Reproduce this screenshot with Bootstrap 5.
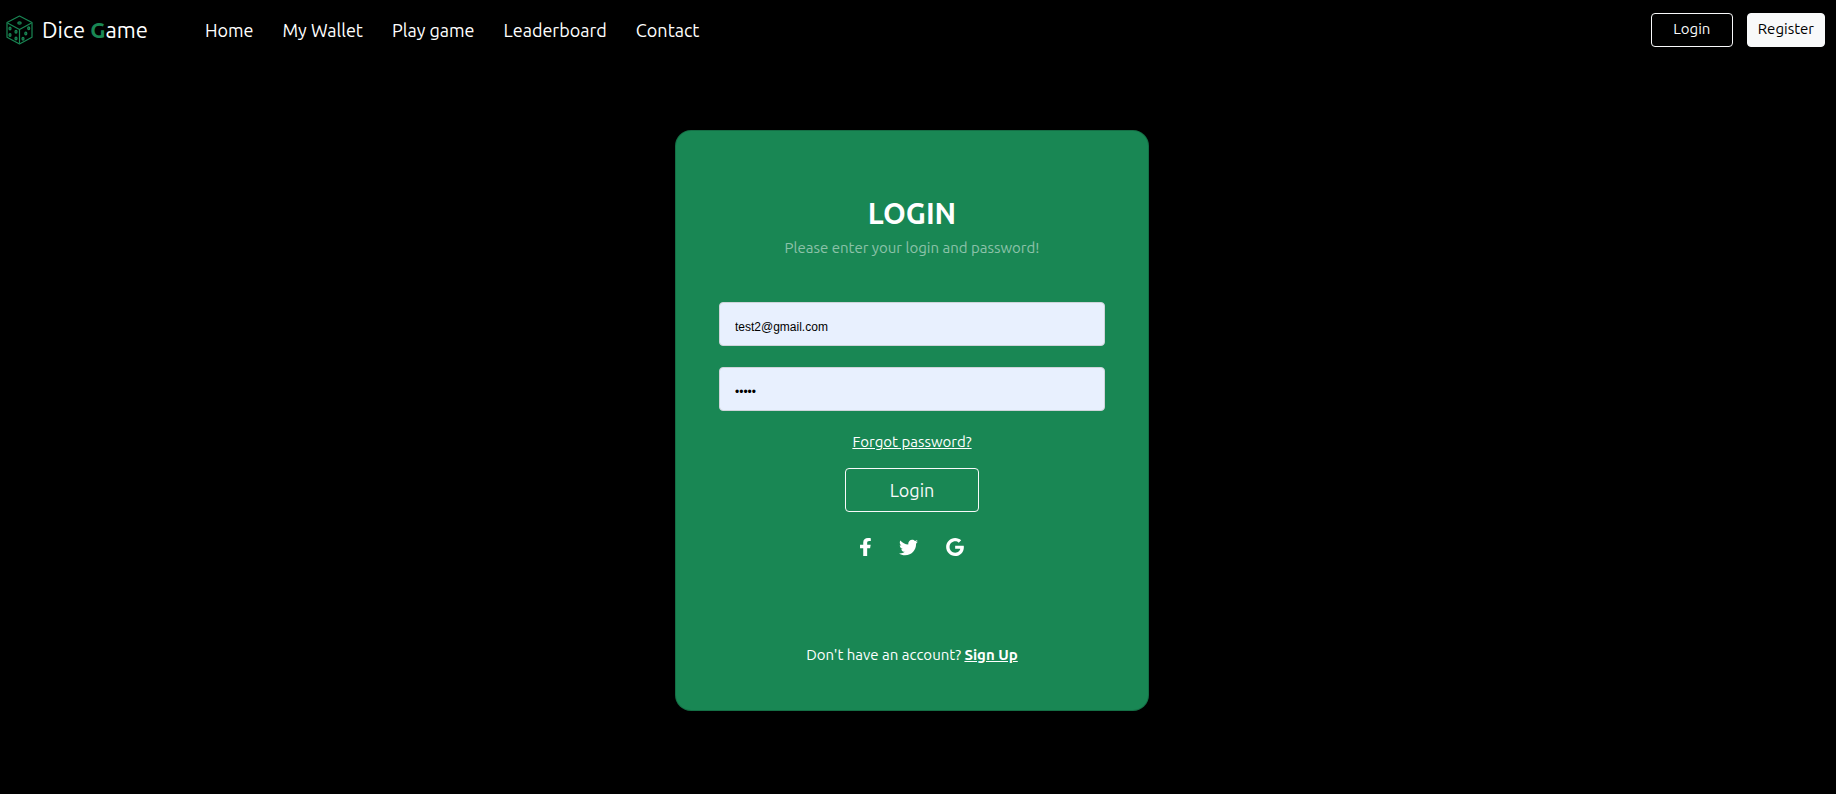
<!DOCTYPE html>
<html lang="en">
<head>
<meta charset="utf-8">
<meta name="viewport" content="width=device-width, initial-scale=1">
<title>Dice Game - Login</title>
<link href="https://cdn.jsdelivr.net/npm/bootstrap@5.3.0/dist/css/bootstrap.min.css" rel="stylesheet">
<style>
  body { background: #000; color: #fff; font-family: Ubuntu, "Open Sans", sans-serif; font-size: 15px; line-height: 20px; }
  .site-nav { --bs-navbar-padding-y: 0; min-height: 60px; padding-right: 11px; padding-left: 6px; }
  .site-nav .navbar-brand { font-size: 22px; line-height: 30px; margin-right: 49px; padding: 0; gap: 9px; }
  .site-nav .navbar-nav { gap: 13px; }
  .site-nav .nav-link { font-size: 18px; line-height: 24px; padding-top: 0; padding-bottom: 0; }
  .nav-actions { gap: 14px; }
  .nav-actions .btn { min-width: 78px; font-size: 15px; line-height: 20px; padding: 5px 10px 7px; border-radius: 4px; }
  .nav-actions .btn-outline-light { min-width: 82px; }
  .page { padding: 70px 24px 80px 12px; }
  .login-card { max-width: 474px; border-radius: 16px; background: #198754; }
  .login-card .card-body { padding: 65px 43px 45px; }
  .login-card h1 { font-size: 29px; line-height: 34px; margin-bottom: 8px; }
  .login-field { height: 44px; padding: 15px 15px 9px; border-color: #ced4da; border-radius: 4px; background: #e8f0fe; color: #000; font: 12px/18px "Liberation Sans", Arial, sans-serif; }
  .login-field:focus { background: #e8f0fe; }
  .fields { gap: 21px; margin: 44px 0 21px; }
  .login-submit { width: 134px; height: 44px; padding: 0; border-radius: 4px; font-size: 18px; margin-top: 16px; }
  .socials { margin: 26px 0 89px; gap: 28px; height: 18px; }
</style>
</head>
<body>
<nav class="navbar navbar-expand-lg navbar-dark site-nav">
  <a class="navbar-brand d-flex align-items-center" href="#">
    <svg width="27" height="30" viewBox="0 0 27 30" fill="none" stroke="#198754" stroke-width="1.2" stroke-linejoin="round" aria-hidden="true">
      <path d="M13.5 1 26 7.5v14.8L13.5 29 1 22.3V7.5z"/>
      <path d="M1.5 8 13.5 14.5 25.5 8M13.5 14.5V28.5"/>
      <g fill="#198754" fill-opacity=".5">
        <ellipse cx="13.5" cy="8" rx="1.7" ry="1.1"/>
        <ellipse cx="4" cy="13.5" rx="1" ry="1.4"/><ellipse cx="10" cy="16.8" rx="1" ry="1.4"/>
        <ellipse cx="4" cy="20" rx="1" ry="1.4"/><ellipse cx="10" cy="23.5" rx="1" ry="1.4"/>
        <ellipse cx="22.7" cy="13.3" rx="1" ry="1.4"/><ellipse cx="19.8" cy="18.5" rx="1" ry="1.4"/><ellipse cx="17" cy="23.7" rx="1" ry="1.4"/>
      </g>
    </svg>
    <span>Dice <b class="text-success">G</b>ame</span>
  </a>
  <button class="navbar-toggler" type="button" data-bs-toggle="collapse" data-bs-target="#mainNav" aria-controls="mainNav" aria-expanded="false" aria-label="Toggle navigation"><span class="navbar-toggler-icon"></span></button>
  <div class="collapse navbar-collapse" id="mainNav">
    <div class="navbar-nav me-auto">
      <a class="nav-link text-white" href="#">Home</a>
      <a class="nav-link text-white" href="#">My Wallet</a>
      <a class="nav-link text-white" href="#">Play game</a>
      <a class="nav-link text-white" href="#">Leaderboard</a>
      <a class="nav-link text-white" href="#">Contact</a>
    </div>
    <div class="d-flex nav-actions">
      <button class="btn btn-outline-light" type="button">Login</button>
      <button class="btn btn-light" type="button">Register</button>
    </div>
  </div>
</nav>

<main class="page d-flex justify-content-center">
  <div class="card login-card text-white w-100">
    <form class="card-body text-center">
      <h1 class="fw-bold text-uppercase">Login</h1>
      <p class="text-white-50 mb-0">Please enter your login and password!</p>
      <div class="fields d-flex flex-column">
        <input class="form-control login-field" type="email" aria-label="Email" value="test2@gmail.com">
        <input class="form-control login-field" type="password" aria-label="Password" value="12345">
      </div>
      <p class="mb-0"><a class="text-white" href="#">Forgot password?</a></p>
      <button class="btn btn-outline-light login-submit" type="submit">Login</button>
      <div class="socials d-flex justify-content-center align-items-center">
        <a class="text-white d-flex" href="#" aria-label="Facebook">
          <svg width="11" height="18" viewBox="22 0 280 512" preserveAspectRatio="none" fill="currentColor"><path d="M279.14 288l14.22-92.66h-88.91v-60.13c0-25.35 12.42-50.06 52.24-50.06h40.42V6.26S260.43 0 225.36 0c-73.22 0-121.08 44.38-121.08 124.72v70.62H22.89V288h81.39v224h100.17V288z"/></svg>
        </a>
        <a class="text-white d-flex" href="#" aria-label="Twitter">
          <svg width="19" height="19" viewBox="0 0 512 512" fill="currentColor"><path d="M459.37 151.716c.325 4.548.325 9.097.325 13.645 0 138.72-105.583 298.558-298.558 298.558-59.452 0-114.68-17.219-161.137-47.106 8.447.974 16.568 1.299 25.34 1.299 49.055 0 94.213-16.568 130.274-44.832-46.132-.975-84.792-31.188-98.112-72.772 6.498.974 12.995 1.624 19.818 1.624 9.421 0 18.843-1.3 27.614-3.573-48.081-9.747-84.143-51.98-84.143-102.985v-1.299c13.969 7.797 30.214 12.67 47.431 13.319-28.264-18.843-46.781-51.005-46.781-87.391 0-19.492 5.197-37.36 14.294-52.954 51.655 63.675 129.3 105.258 216.365 109.807-1.624-7.797-2.599-15.918-2.599-24.04 0-57.828 46.782-104.934 104.934-104.934 30.213 0 57.502 12.67 76.67 33.137 23.715-4.548 46.456-13.32 66.599-25.34-7.798 24.366-24.366 44.833-46.132 57.827 21.117-2.273 41.584-8.122 60.426-16.243-14.292 20.791-32.161 39.308-52.628 54.253z"/></svg>
        </a>
        <a class="text-white d-flex" href="#" aria-label="Google">
          <svg width="18" height="18" viewBox="0 8 488 496" fill="currentColor"><path d="M488 261.8C488 403.3 391.1 504 248 504 110.8 504 0 393.2 0 256S110.8 8 248 8c66.8 0 123 24.5 166.3 64.9l-67.5 64.9C258.5 52.6 94.3 116.6 94.3 256c0 86.5 69.1 156.6 153.7 156.6 98.2 0 135-70.4 140.8-106.9H248v-85.3h236.1c2.3 12.7 3.9 24.9 3.9 41.4z"/></svg>
        </a>
      </div>
      <p class="mb-0">Don't have an account? <a class="text-white fw-bold" href="#">Sign Up</a></p>
    </form>
  </div>
</main>
<script src="https://cdn.jsdelivr.net/npm/bootstrap@5.3.0/dist/js/bootstrap.bundle.min.js"></script>
</body>
</html>
